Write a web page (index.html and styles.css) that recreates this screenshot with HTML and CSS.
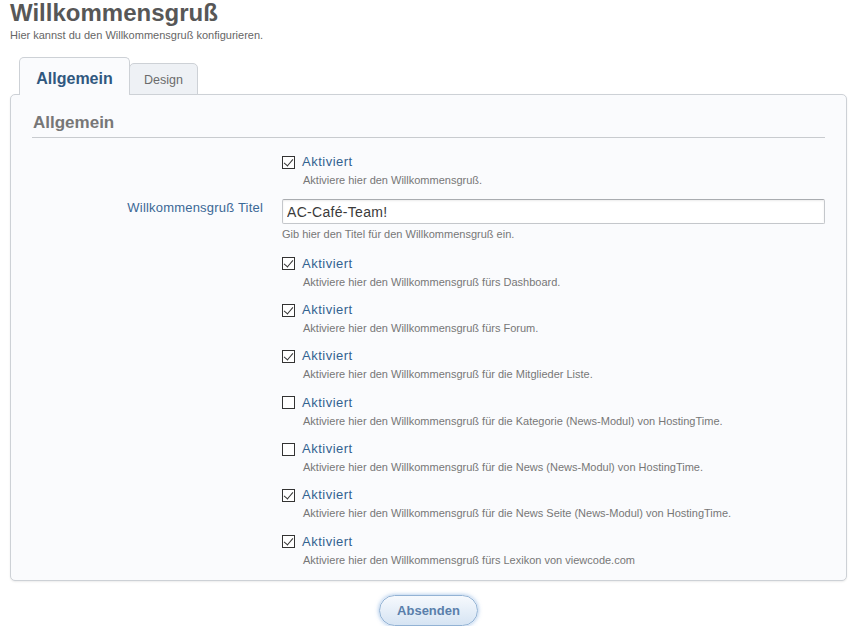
FILE: index.html
```html
<!DOCTYPE html>
<html lang="de">
<head>
    <meta charset="UTF-8">
    <meta name="viewport" content="width=device-width, initial-scale=1.0">
    <title>Willkommensgruß</title>
    <link rel="stylesheet" href="styles.css">
</head>
<body>
    <header class="page-header">
        <h1>Willkommensgruß</h1>
        <p>Hier kannst du den Willkommensgruß konfigurieren.</p>
    </header>

    <form class="settings-form" onsubmit="return false;">
        <ul class="tab-menu">
            <li class="tab active">Allgemein</li>
            <li class="tab">Design</li>
        </ul>

        <div class="tab-panel">
            <fieldset class="section">
                <legend>Allgemein</legend>

                <dl class="form-row">
                    <dt></dt>
                    <dd>
                        <label class="check-label"><input type="checkbox" checked> Aktiviert</label>
                        <small>Aktiviere hier den Willkommensgruß.</small>
                    </dd>
                </dl>

                <dl class="form-row title-row">
                    <dt><label for="welcome-title">Willkommensgruß Titel</label></dt>
                    <dd>
                        <input type="text" id="welcome-title" class="text-input" value="AC-Café-Team!">
                        <small>Gib hier den Titel für den Willkommensgruß ein.</small>
                    </dd>
                </dl>

                <dl class="form-row">
                    <dt></dt>
                    <dd>
                        <label class="check-label"><input type="checkbox" checked> Aktiviert</label>
                        <small>Aktiviere hier den Willkommensgruß fürs Dashboard.</small>
                    </dd>
                </dl>

                <dl class="form-row">
                    <dt></dt>
                    <dd>
                        <label class="check-label"><input type="checkbox" checked> Aktiviert</label>
                        <small>Aktiviere hier den Willkommensgruß fürs Forum.</small>
                    </dd>
                </dl>

                <dl class="form-row">
                    <dt></dt>
                    <dd>
                        <label class="check-label"><input type="checkbox" checked> Aktiviert</label>
                        <small>Aktiviere hier den Willkommensgruß für die Mitglieder Liste.</small>
                    </dd>
                </dl>

                <dl class="form-row">
                    <dt></dt>
                    <dd>
                        <label class="check-label"><input type="checkbox"> Aktiviert</label>
                        <small>Aktiviere hier den Willkommensgruß für die Kategorie (News-Modul) von HostingTime.</small>
                    </dd>
                </dl>

                <dl class="form-row">
                    <dt></dt>
                    <dd>
                        <label class="check-label"><input type="checkbox"> Aktiviert</label>
                        <small>Aktiviere hier den Willkommensgruß für die News (News-Modul) von HostingTime.</small>
                    </dd>
                </dl>

                <dl class="form-row">
                    <dt></dt>
                    <dd>
                        <label class="check-label"><input type="checkbox" checked> Aktiviert</label>
                        <small>Aktiviere hier den Willkommensgruß für die News Seite (News-Modul) von HostingTime.</small>
                    </dd>
                </dl>

                <dl class="form-row">
                    <dt></dt>
                    <dd>
                        <label class="check-label"><input type="checkbox" checked> Aktiviert</label>
                        <small>Aktiviere hier den Willkommensgruß fürs Lexikon von viewcode.com</small>
                    </dd>
                </dl>
            </fieldset>
        </div>

        <div class="form-submit">
            <button type="submit">Absenden</button>
        </div>
    </form>
</body>
</html>
```

FILE: styles.css
```css
body {
    font-family: 'Liberation Sans', Arial, sans-serif;
    margin: 0;
    padding: 0 10px;
    background-color: #fff;
    color: #555;
}

.page-header h1 {
    margin: 0;
    padding-top: 0;
    font-size: 24px;
    line-height: 26px;
    font-weight: bold;
    color: #575757;
}

.page-header p {
    margin: 2px 0 0;
    font-size: 11px;
    line-height: 14px;
    color: #666;
}

.settings-form {
    margin-top: 15px;
}

.tab-menu {
    list-style: none;
    margin: 0 0 -1px 9px;
    padding: 0;
    display: flex;
    align-items: flex-end;
    position: relative;
    z-index: 1;
}

.tab {
    box-sizing: border-box;
    border: 1px solid #cdd1d6;
    border-bottom: none;
    border-radius: 5px 5px 0 0;
}

.tab.active {
    width: 111px;
    height: 38px;
    padding-top: 10px;
    text-align: center;
    font-size: 16px;
    line-height: 22px;
    font-weight: bold;
    color: #30587f;
    background: #fafbfd;
}

.tab:not(.active) {
    width: 69px;
    height: 32px;
    margin-left: -1px;
    padding-top: 8px;
    text-align: center;
    font-size: 12.5px;
    line-height: 17px;
    color: #6b6b6b;
    background: #eef1f5;
    border-bottom: 1px solid #cdd1d6;
}

.tab-panel {
    background: #fafbfd;
    border: 1px solid #cdd1d6;
    border-radius: 5px;
    box-shadow: 0 1px 2px rgba(0, 0, 0, 0.08);
    padding: 16px 21px 1px 21px;
}

.section {
    margin: 0;
    padding: 0;
    border: none;
}

.section legend {
    display: block;
    float: left;
    width: 100%;
    box-sizing: border-box;
    padding: 0 0 3px 1px;
    font-size: 17px;
    line-height: 23px;
    font-weight: bold;
    color: #777;
    border-bottom: 1px solid #c8cbcf;
    margin-bottom: 15px;
}

.form-row {
    clear: both;
    display: grid;
    grid-template-columns: 250px 1fr;
    margin: 0 0 11.33px;
}

.form-row dt {
    text-align: right;
    padding-right: 19px;
    font-size: 13px;
    line-height: 18px;
    letter-spacing: 0.2px;
}

.form-row dt label {
    color: #3a6896;
}

.form-row dd {
    margin: 0;
}

.form-row small {
    display: block;
    margin: 1px 0 0 21px;
    font-size: 11px;
    line-height: 16px;
    color: #777;
}

.check-label {
    display: flex;
    align-items: center;
    gap: 7px;
    font-size: 13px;
    line-height: 18px;
    letter-spacing: 0.5px;
    color: #336290;
}

.check-label input {
    appearance: none;
    -webkit-appearance: none;
    box-sizing: border-box;
    width: 13px;
    height: 13px;
    margin: 0;
    border: 1px solid #333;
    background: #fff;
    position: relative;
}

.check-label input:checked::after {
    content: "";
    position: absolute;
    left: 3px;
    top: 0px;
    width: 4px;
    height: 8px;
    border: solid #333;
    border-width: 0 1px 1px 0;
    transform: rotate(40deg);
}

.title-row {
    margin-top: -10px;
    margin-bottom: 12.5px;
}

.title-row dt {
    padding-top: 10px;
}

.title-row dd {
    padding-top: 10px;
}

.title-row small {
    margin: 2px 0 0 0;
}

.text-input {
    display: block;
    box-sizing: border-box;
    width: 100%;
    height: 25px;
    margin: 0;
    padding: 2px 4px;
    font-family: 'Liberation Sans', Arial, sans-serif;
    font-size: 14px;
    letter-spacing: 0.3px;
    color: #3a3a3a;
    background: #fff;
    border: 1px solid #c4c7cb;
    border-top-color: #a9acb0;
    border-radius: 2px;
    box-shadow: inset 0 1px 2px rgba(0, 0, 0, 0.08);
}

.form-submit {
    text-align: center;
    padding-top: 14px;
}

.form-submit button {
    width: 99px;
    height: 31px;
    border-radius: 16px;
    border: 1px solid #92b2d4;
    background: linear-gradient(#f6f9fd, #d6e4f3);
    box-shadow: 0 0 4px rgba(110, 160, 220, 0.7);
    font-family: 'Liberation Sans', Arial, sans-serif;
    font-size: 13px;
    font-weight: bold;
    color: #5a7fab;
    cursor: pointer;
}
```
